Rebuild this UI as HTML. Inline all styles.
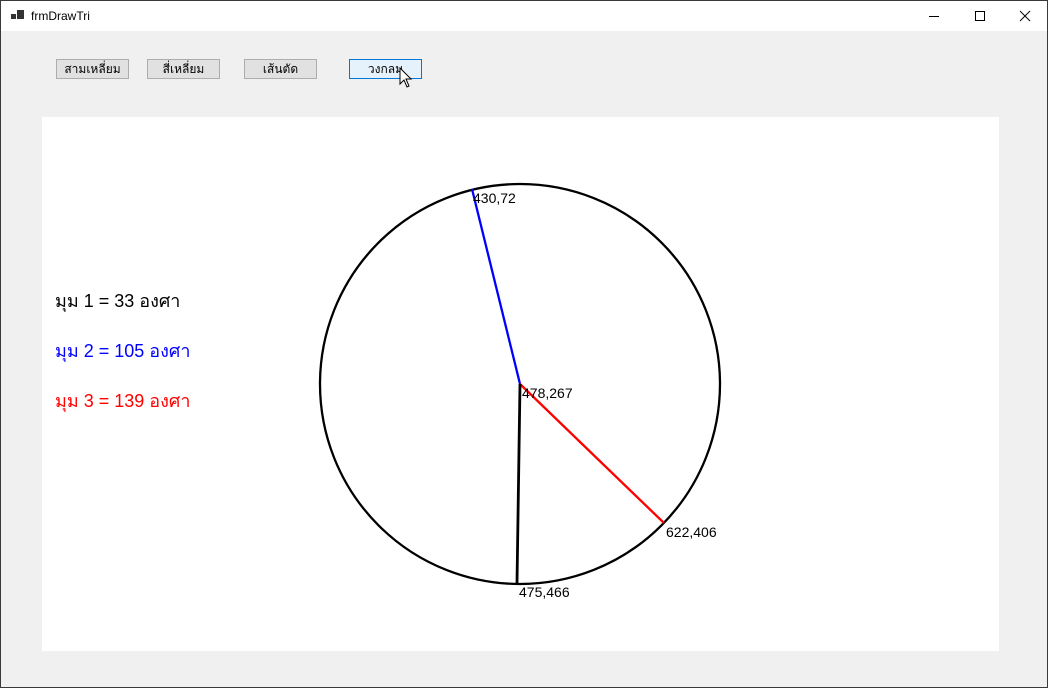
<!DOCTYPE html>
<html><head><meta charset="utf-8">
<style>
*{margin:0;padding:0;box-sizing:border-box}
html,body{width:1048px;height:688px;overflow:hidden}
body{background:#f0f0f0;font-family:"Liberation Sans",sans-serif;position:relative;border:1px solid #3a3a3a}
.title{position:absolute;left:0;top:0;width:1046px;height:30px;background:#fff}
.title .t{position:absolute;left:30px;top:8px;font-size:12px;color:#000}
.btn{position:absolute;top:58px;height:20px;border:1px solid #adadad;background:#e1e1e1;font-size:12px;text-align:center;line-height:18px;font-family:"Liberation Sans","DejaVu Sans",sans-serif}
.panel{position:absolute;left:41px;top:116px;width:957px;height:534px;background:#fff}
.lbl{position:absolute;left:13px;font-size:18px;font-family:"Liberation Sans","DejaVu Sans",sans-serif}
</style></head><body>
<div class="title">
<svg style="position:absolute;left:10px;top:9px" width="14" height="12"><rect x="0" y="4" width="5" height="5" fill="#333"/><rect x="6" y="0" width="7" height="9" fill="#333"/></svg>
<div class="t">frmDrawTri</div>
<svg style="position:absolute;left:928px;top:9px" width="110" height="14" stroke="#000" fill="none" stroke-width="1">
<line x1="0" y1="6.5" x2="10" y2="6.5"/>
<rect x="46.5" y="1.5" width="9" height="9"/>
<line x1="91" y1="1" x2="101" y2="11"/><line x1="101" y1="1" x2="91" y2="11"/>
</svg>
</div>
<div class="btn" style="left:55px;width:73px">สามเหลี่ยม</div>
<div class="btn" style="left:146px;width:73px">สี่เหลี่ยม</div>
<div class="btn" style="left:243px;width:73px">เส้นตัด</div>
<div class="btn" style="left:348px;width:73px;border-color:#0078d7;background:#e5f1fb">วงกลม</div>
<svg style="position:absolute;left:398px;top:66px" width="14" height="22"><path d="M1 1 L1 17 L5 13 L8 20 L10 19 L7 12 L12 12 Z" fill="#fff" stroke="#000" stroke-width="1"/></svg>
<div class="panel">
<div class="lbl" style="top:169px;color:#000">มุม 1 = 33 องศา</div>
<div class="lbl" style="top:219px;color:#00f">มุม 2 = 105 องศา</div>
<div class="lbl" style="top:269px;color:#f00">มุม 3 = 139 องศา</div>
<svg style="position:absolute;left:0;top:0" width="957" height="534" viewBox="1 0 957 534">
<circle cx="479" cy="267" r="200" fill="none" stroke="#000" stroke-width="2.3"/>
<line x1="479" y1="267" x2="431" y2="72" stroke="#00f" stroke-width="2.3"/>
<line x1="479" y1="267" x2="623" y2="406" stroke="#f00" stroke-width="2.3"/>
<line x1="479" y1="267" x2="476" y2="466" stroke="#000" stroke-width="2.8"/>
<g font-family="Liberation Sans" font-size="14" fill="#000">
<text x="432" y="86">430,72</text>
<text x="481" y="281">478,267</text>
<text x="625" y="420">622,406</text>
<text x="478" y="480">475,466</text>
</g>
</svg>
</div>
</body></html>
